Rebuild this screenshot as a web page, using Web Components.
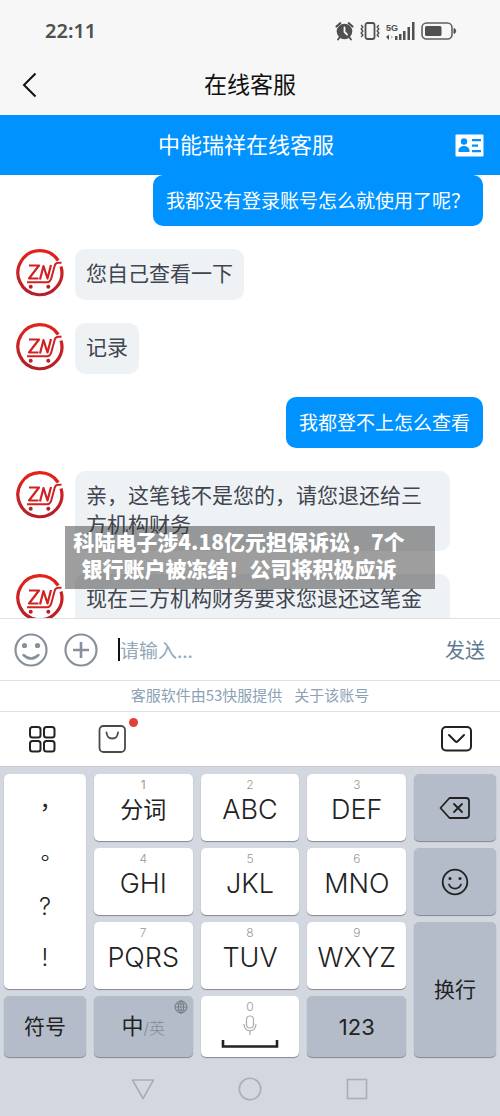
<!DOCTYPE html>
<html lang="zh-CN">
<head>
<meta charset="utf-8">
<meta name="viewport" content="width=device-width, initial-scale=1">
<title>在线客服</title>
<style>
  html, body { margin: 0; height: 100%; }
  body { font-family: "Noto Sans CJK SC", sans-serif; background: #fff; overflow: hidden; }
</style>
</head>
<body>
<service-app></service-app>
<script>
const define = (name, html, setup) => {
  const template = document.createElement('template');
  template.innerHTML = '<style>*{box-sizing:border-box}svg{display:block}button{font:inherit;color:inherit;border:0;padding:0;margin:0;background:none;cursor:pointer}</style>' + html;
  customElements.define(name, class extends HTMLElement {
    constructor() {
      super();
      this.attachShadow({ mode: 'open' }).append(template.content.cloneNode(true));
      if (setup) setup(this);
    }
  });
};

define('status-bar', `
<style>
  :host { display: flex; align-items: center; justify-content: space-between; height: 62px; padding: 0 43px 0 45px; background: #f7f7f7; color: #505050; box-sizing: border-box; }
  time { font: 600 20px/24px "Noto Sans", sans-serif; }
  .icons { display: flex; align-items: center; gap: 6px; }
</style>
<time>22:11</time>
<div class="icons">
  <svg width="19" height="20" viewBox="0 0 19 20" fill="none" stroke="#505050" stroke-linecap="round"><circle cx="9.5" cy="10.5" r="7.8" fill="#505050" stroke="none"/><path d="M1.500 5.500L5.200 2.200M17.500 5.500L13.800 2.200" stroke-width="2.200"/><path d="M4.500 16.500L3 18.500M14.500 16.500L16 18.500" stroke-width="1.800"/><path d="M9.500 6.500V11L12 13.500" stroke="#f7f7f7" stroke-width="1.800"/></svg>
  <svg width="20" height="20" viewBox="0 0 20 20" fill="none" stroke="#505050"><rect x="5.500" y="2" width="9" height="16" rx="2" stroke-width="1.800"/><path d="M1.200 4l1.600 2-1.600 2 1.600 2-1.600 2 1.600 2-1.600 2M18.800 4l-1.600 2 1.600 2-1.600 2 1.600 2-1.600 2 1.600 2" stroke-width="1.400"/></svg>
  <svg width="29" height="20" viewBox="0 0 29 20" fill="#505050"><text x="0" y="10" font-family="Liberation Sans" font-weight="700" font-size="9">5G</text><path d="M9 15h2.500v4H9zM13 13h2.500v6H13zM17 10h2.500v9H17zM21.500 6H24v13h-2.500zM26 1h2.500v18H26zM0 16l3-2.500V19z"/><path d="M5 14l2 2-2 2z" fill="#bbb"/></svg>
  <svg width="36" height="20" viewBox="0 0 36 20" fill="none"><rect x="1" y="2" width="30" height="16" rx="4.500" stroke="#606060" stroke-width="1.600"/><rect x="4" y="5" width="16.500" height="10" rx="1.500" fill="#505050"/><path d="M33 7.500c2.200.5 2.200 4.500 0 5z" fill="#505050" stroke="#505050"/></svg>
</div>`);

define('page-nav', `
<style>
  :host { display: grid; grid-template-columns: 1fr auto 1fr; align-items: center; height: 53px; padding: 0 18px 12px; background: #f7f7f7; color: #111; box-sizing: border-box; }
  h1 { margin: 0; font-size: 23px; line-height: 32px; font-weight: 400; }
  button { width: 24px; height: 32px; }
</style>
<button aria-label="返回"><svg width="24" height="32" viewBox="0 0 24 32" fill="none" stroke="#111" stroke-width="2"><path d="M17.500 6.500L6 18L17.500 29.500"/></svg></button>
<h1>在线客服</h1>`);

define('service-header', `
<style>
  :host { display: grid; grid-template-columns: 1fr auto 1fr; align-items: center; height: 60px; padding: 0 16px; background: #0093ff; color: #fff; box-sizing: border-box; }
  h2 { margin: 0; padding: 0 8px 4px 0; grid-column: 2; font-size: 22px; line-height: 32px; font-weight: 400; }
  button { justify-self: end; }
</style>
<h2>中能瑞祥在线客服</h2>
<button aria-label="名片"><svg width="29" height="23" viewBox="0 0 29 23"><rect x=".5" y=".5" width="28" height="22" rx="1" fill="#fff"/><g fill="#0093ff"><circle cx="9" cy="7.500" r="3.200"/><path d="M3.500 18v-1.500c0-3 3-4.500 5.500-4.500s5.500 1.500 5.500 4.500V18zM17 5h9v2.200h-9zM17 10.500h6v2.200h-6zM17 16h9v2.200h-9z"/></g></svg></button>`);

define('shop-avatar', `
<style>:host { display: block; flex: none; width: 48px; height: 48px; }</style>
<svg width="48" height="48" viewBox="0 0 48 48" fill="none" role="img" aria-label="ZN">
  <defs><linearGradient id="g" x1="0" y1="0" x2="0" y2="1"><stop offset="0" stop-color="#e2231a"/><stop offset="1" stop-color="#b3202a"/></linearGradient></defs>
  <g stroke="#cf2222">
    <path d="M42.200 11.500A22 22 0 1 0 45 17.500" stroke="url(#g)" stroke-width="3.200"/>
    <path d="M13 16.500h10L13 29.500h9.500M24 30.500L27.500 17L31.500 29.500L35 16" stroke-width="2.200" stroke-linejoin="round"/>
    <path d="M45.500 13.800h-3q-3 0-3.800 3L35.500 28.500q-1 4.700-4.500 4.700H11" stroke-width="2"/>
  </g>
  <circle cx="14.700" cy="37.800" r="2" fill="#b82026"/><circle cx="32.300" cy="37.800" r="2" fill="#b82026"/>
</svg>`);

define('chat-message', `
<style>
  :host { display: flex; align-items: flex-start; gap: 11px; padding: 0 50px 0 16px; }
  :host([side="me"]) { justify-content: flex-end; padding: 0 17px 0 50px; }
  :host([side="me"]) shop-avatar { display: none; }
  p { margin: 0; padding: 9px 11px 13px; border-radius: 10px; font-size: 21px; line-height: 29px; background: #eff2f5; color: #40454f; }
  :host([side="me"]) p { background: #0093ff; color: #fff; font-size: 19px; padding: 10px 13px 12px; }
  :host([wide]) p { flex: 1; }
</style>
<shop-avatar></shop-avatar><p><slot></slot></p>`);

define('caption-banner', `
<style>
  :host { display: block; padding: 2px 30px 7px 8px; background: rgba(48,48,48,.47); color: #fff; text-align: center; white-space: nowrap; font-size: 21px; line-height: 27px; font-weight: 900; }
</style>
<slot></slot>`);

define('chat-log', `
<style>
  :host { display: flex; flex-direction: column; gap: 23px; flex: 1; min-height: 0; overflow: hidden; position: relative; background: #fff; }
  ::slotted(chat-message) { flex: none; }
  ::slotted(caption-banner) { position: absolute; left: 13%; right: 13%; bottom: 29px; }
</style>
<slot></slot>`);

define('message-composer', `
<style>
  :host { display: block; background: #fff; border-top: 1px solid #dfe1e3; }
  form { display: flex; align-items: center; height: 61px; padding: 0 15px 0 14px; }
  form > button { flex: none; }
  .plus { margin-left: 16px; }
  .caret { width: 2px; height: 23px; background: #111; margin-left: 20px; }
  input { flex: 1; min-width: 0; border: 0; outline: 0; padding: 0; background: none; font: 19px/28px "Noto Sans CJK SC", sans-serif; color: #333; }
  input::placeholder { color: #93a7b8; opacity: 1; }
  .send { font-size: 20px; line-height: 28px; color: #5f7a90; }
  footer { display: flex; justify-content: center; gap: 12px; height: 32px; border: solid #dfe1e3; border-width: 1px 0; font-size: 15px; line-height: 28px; }
  footer a { color: #8ba1b5; text-decoration: none; }
</style>
<form>
  <button type="button" aria-label="表情"><svg width="34" height="34" viewBox="0 0 34 34" fill="none" stroke="#87919b" stroke-width="2.200"><circle cx="17" cy="17" r="15.500"/><path d="M9.500 22q7.500 7 15 0" stroke-width="2.400" stroke-linecap="round"/><circle cx="10.500" cy="12.500" r="2.600" fill="#87919b" stroke="none"/><circle cx="23.500" cy="12.500" r="2.600" fill="#87919b" stroke="none"/></svg></button>
  <button class="plus" type="button" aria-label="更多"><svg width="34" height="34" viewBox="0 0 34 34" fill="none" stroke="#87919b"><circle cx="17" cy="17" r="15.500" stroke-width="2.200"/><path d="M17 9v16M9 17h16" stroke-width="2.600"/></svg></button>
  <span class="caret"></span>
  <input type="text" aria-label="消息" placeholder="请输入...">
  <button class="send" type="submit">发送</button>
</form>
<footer><a href="#provider">客服软件由53快服提供</a><a href="#about">关于该账号</a></footer>`);

define('keyboard-toolbar', `
<style>
  :host { display: flex; align-items: center; height: 54px; padding: 0 28px; background: #fff; box-sizing: border-box; }
  .bag { position: relative; margin-left: 42px; }
  .bag::after { content: ""; position: absolute; right: -12px; top: -7px; width: 9px; height: 9px; border-radius: 50%; background: #e04038; }
  .hide { margin-left: auto; }
</style>
<button aria-label="菜单"><svg width="28" height="28" viewBox="0 0 28 28" fill="none" stroke="#222" stroke-width="2"><rect x="2" y="2" width="10.500" height="10.500" rx="2.500"/><rect x="16" y="2" width="10.500" height="10.500" rx="2.500"/><rect x="2" y="16" width="10.500" height="10.500" rx="2.500"/><rect x="16" y="16" width="10.500" height="10.500" rx="2.500"/></svg></button>
<button class="bag" aria-label="商店"><svg width="28" height="28" viewBox="0 0 28 28" fill="none" stroke="#4a4a4a" stroke-width="1.800"><rect x="1.500" y="1" width="25.500" height="26" rx="4"/><path d="M8.500 7.500c.8 8 10.700 8 11.500 0" stroke-linecap="round"/></svg></button>
<button class="hide" aria-label="收起键盘"><svg width="31" height="26" viewBox="0 0 31 26" fill="none" stroke="#222" stroke-width="2"><rect x="1" y="1" width="29" height="23.500" rx="4"/><path d="M8 9l6.500 6.500q1 .8 2 0L23 9" stroke-linecap="round"/></svg></button>`);

define('key-cap', `
<style>
  :host { display: block; min-width: 0; }
  button { position: relative; display: grid; place-items: center; width: 100%; height: 100%; border-radius: 5px; background: #fff; box-shadow: 0 1px 1px #83878d; color: #222; font: 300 27px/32px Inter, "Noto Sans CJK SC", sans-serif; }
  :host([tone="dark"]) button { background: #b3bcc8; }
  :host([size="word"]) button { font-size: 23px; font-weight: 400; }
  :host([size="label"]) button { font-size: 21px; font-weight: 400; }
  :host([size="digits"]) button { font-size: 22px; font-weight: 400; }
  .hint { position: absolute; left: 0; right: 0; top: 3px; color: #999; font-size: 12px; line-height: 15px; text-align: center; }
  .body { padding-top: 5px; }
  :host([tone="dark"]) .body { padding-top: 0; }
</style>
<button><span class="hint"></span><span class="body"><slot></slot></span></button>`, host => {
  host.shadowRoot.querySelector('.hint').textContent = host.getAttribute('hint') || '';
});

define('punctuation-keys', `
<style>
  :host { display: grid; grid-template-rows: repeat(4, 1fr); padding: 5px 0; border-radius: 5px; background: #fff; box-shadow: 0 1px 1px #83878d; box-sizing: border-box; }
  button { color: #222; font: 400 22px/30px "Noto Sans CJK TC", sans-serif; }
  .latin { font: 300 24px/30px Inter, sans-serif; }
</style>
<button lang="zh-TW">，</button><button lang="zh-TW">。</button><button class="latin">?</button><button class="latin">!</button>`);

define('language-face', `
<style>
  :host { display: flex; align-items: baseline; font-size: 22px; line-height: 30px; }
  small { font-size: 16px; color: #858c96; font-weight: 300; }
  svg { position: absolute; right: 5px; top: 4px; }
</style>
<span>中</span><small>/英</small>
<svg width="14" height="14" viewBox="0 0 14 14" fill="none" stroke="#6f7780"><circle cx="7" cy="7" r="6"/><ellipse cx="7" cy="7" rx="2.700" ry="6"/><path d="M1 7h12M2 4h10M2 10h10M7 1v12" stroke-width=".8"/></svg>`);

define('space-face', `
<style>:host { display: block; margin-top: 8px; }</style>
<svg width="58" height="38" viewBox="0 0 58 38" fill="none"><g stroke="#aaa" stroke-width="1.200"><rect x="25.500" y="2" width="7" height="12" rx="3.500"/><path d="M23 10c0 9 12 9 12 0M29 17v4"/></g><path d="M2 26v6.500h54V26" stroke="#222" stroke-width="2.600"/></svg>`);

define('nine-keypad', `
<style>
  :host { display: grid; grid-template-columns: 82fr 99fr 99fr 99fr 82fr; grid-template-rows: 67px 67px 67px 61px; gap: 7px 8px; padding: 7px 4px 0; background: #d3d8e0; border-top: 1px solid #c9cdd3; }
  punctuation-keys { grid-row: 1 / 4; }
  .enter { grid-row: 3 / 5; grid-column: 5; }
</style>
<punctuation-keys></punctuation-keys>
<key-cap hint="1" size="word">分词</key-cap><key-cap hint="2">ABC</key-cap><key-cap hint="3">DEF</key-cap>
<key-cap tone="dark"><svg width="32" height="24" viewBox="0 0 32 24" fill="none" stroke="#222" stroke-width="1.800" stroke-linejoin="round" stroke-linecap="round" role="img" aria-label="删除"><path d="M10.500 2H27q3 0 3 3v14q0 3-3 3H10.500L1.500 12z"/><path d="M15 8l8 8M23 8l-8 8"/></svg></key-cap>
<key-cap hint="4">GHI</key-cap><key-cap hint="5">JKL</key-cap><key-cap hint="6">MNO</key-cap>
<key-cap tone="dark"><svg width="28" height="28" viewBox="0 0 28 28" fill="none" stroke="#222" stroke-width="1.800" role="img" aria-label="表情"><circle cx="14" cy="14" r="12.300"/><path d="M8 16.500c2.500 5.500 9.500 5.500 12 0" stroke-linecap="round"/><circle cx="9" cy="10.500" r="1.500" fill="#222" stroke="none"/><circle cx="19" cy="10.500" r="1.500" fill="#222" stroke="none"/></svg></key-cap>
<key-cap hint="7">PQRS</key-cap><key-cap hint="8">TUV</key-cap><key-cap hint="9">WXYZ</key-cap>
<key-cap class="enter" tone="dark" size="label">换行</key-cap>
<key-cap tone="dark" size="label">符号</key-cap>
<key-cap tone="dark" size="label"><language-face></language-face></key-cap>
<key-cap hint="0"><space-face></space-face></key-cap>
<key-cap tone="dark" size="digits">123</key-cap>`);

define('system-nav', `
<style>
  :host { display: grid; grid-template-columns: repeat(3, 1fr); place-items: center; height: 59px; padding: 5px 18% 0; background: #d3d8e0; box-sizing: border-box; }
</style>
<button aria-label="返回"><svg width="24" height="24" viewBox="0 0 24 24" fill="none" stroke="#a9aeb6" stroke-width="1.600" stroke-linejoin="round"><path d="M1.500 3h21L12 21.500z"/></svg></button>
<button aria-label="主页"><svg width="24" height="24" viewBox="0 0 24 24" fill="none" stroke="#a9aeb6" stroke-width="1.600"><circle cx="12" cy="12" r="10.700"/></svg></button>
<button aria-label="最近"><svg width="24" height="24" viewBox="0 0 24 24" fill="none" stroke="#a9aeb6" stroke-width="1.600"><rect x="2.500" y="2.500" width="19" height="19"/></svg></button>`);

define('service-app', `
<style>
  :host { display: flex; flex-direction: column; height: 100vh; }
  status-bar, page-nav, service-header, message-composer, keyboard-toolbar, nine-keypad, system-nav { flex: none; }
</style>
<status-bar></status-bar>
<page-nav></page-nav>
<service-header></service-header>
<chat-log>
  <chat-message side="me">我都没有登录账号怎么就使用了呢？</chat-message>
  <chat-message>您自己查看一下</chat-message>
  <chat-message>记录</chat-message>
  <chat-message side="me">我都登不上怎么查看</chat-message>
  <chat-message>亲，这笔钱不是您的，请您退还给三方机构财务</chat-message>
  <chat-message wide>现在三方机构财务要求您退还这笔金</chat-message>
  <caption-banner>科陆电子涉4.18亿元担保诉讼，7个<br>银行账户被冻结！公司将积极应诉</caption-banner>
</chat-log>
<message-composer></message-composer>
<keyboard-toolbar></keyboard-toolbar>
<nine-keypad></nine-keypad>
<system-nav></system-nav>`);
</script>
</body>
</html>
